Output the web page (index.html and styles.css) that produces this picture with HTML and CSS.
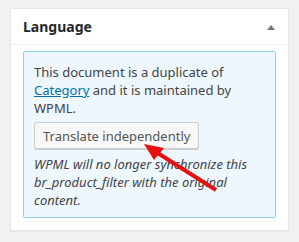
FILE: index.html
```html
<!DOCTYPE html>
<html lang="en">
<head>
    <meta charset="UTF-8">
    <title>Language</title>
    <link rel="stylesheet" href="styles.css">
</head>
<body>

<div class="postbox">
    <div class="postbox-header">
        <h2 class="hndle">Language</h2>
        <span class="toggle">
            <svg width="8" height="5" viewBox="0 0 8 5"><polygon points="4,0 8,5 0,5" fill="#72777c"/></svg>
        </span>
    </div>
    <div class="inside">
        <div class="notice">
            <p>This document is a duplicate of <a href="#">Category</a> and it is maintained by WPML.</p>
            <button class="button">Translate independently</button>
            <p class="hint">WPML will no longer synchronize this br_product_filter with the original content.</p>
        </div>
    </div>
    <svg class="arrow" width="299" height="242" viewBox="0 0 299 242">
        <line x1="216" y1="190" x2="156" y2="152" stroke="#e8100f" stroke-width="4"/>
        <polygon points="144,144 164,148 154,160" fill="#e8100f"/>
    </svg>
</div>

</body>
</html>
```

FILE: styles.css
```css
body {
    margin: 0;
    padding: 8px 10px;
    background: #f1f1f1;
    font-family: "Noto Sans", "Open Sans", sans-serif;
    font-size: 13px;
    color: #444;
}
.postbox {
    width: 277px;
    background: #fff;
    border: 1px solid #e5e5e5;
    box-shadow: 0 1px 1px rgba(0, 0, 0, 0.04);
}
.postbox-header {
    display: flex;
    align-items: center;
    justify-content: space-between;
    height: 35px;
    padding: 0 13px 0 12px;
    border-bottom: 1px solid #eee;
}
.hndle {
    margin: 0;
    font-size: 14px;
    font-weight: 700;
    color: #23282d;
}
.toggle {
    display: flex;
    padding-top: 1px;
}
.inside {
    padding: 6px 12px 12px;
}
.notice {
    background: #eef7fd;
    border: 1px solid #8fd0ee;
    border-radius: 2px;
    padding: 11px 10px 8px;
}
.notice p {
    margin: 0;
    line-height: 18px;
}
.notice a {
    color: #0073aa;
}
.button {
    margin: 5px 0 6px;
    height: 27px;
    padding: 0 8px;
    font-family: inherit;
    font-size: 13px;
    color: #555;
    background: #f7f7f7;
    border: 1px solid #ccc;
    border-radius: 3px;
    box-shadow: 0 1px 0 #ccc;
}
.notice .hint {
    font-style: italic;
}
.arrow {
    position: absolute;
    left: 0;
    top: 0;
    pointer-events: none;
}
```
